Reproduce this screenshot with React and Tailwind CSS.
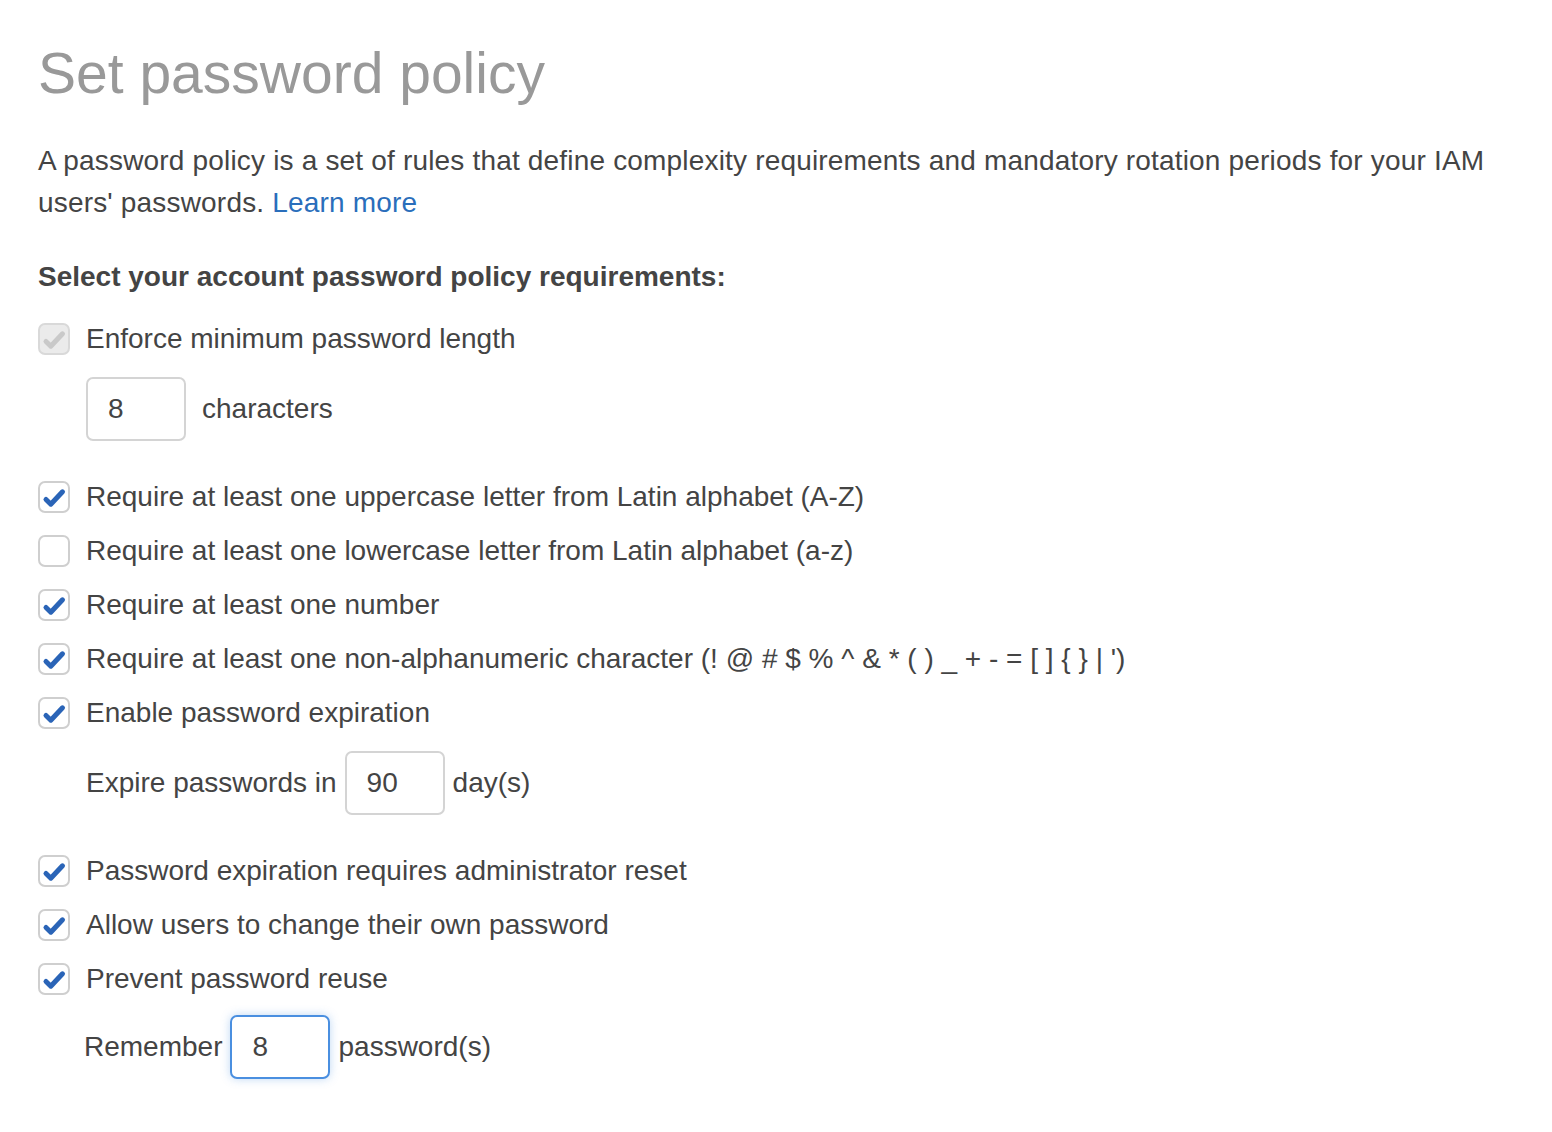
import React from 'react';

// viewBox offset by the 2px border so coordinates are relative to the outer box
const Check = ({ color }) => (
  <svg viewBox="2 2 28 28" className="w-full h-full">
    <path d="M8 18.5 L12.8 23.2 L24.5 10.8" fill="none" stroke={color} strokeWidth="5" strokeLinecap="round" strokeLinejoin="round" />
  </svg>
);

const Checkbox = ({ checked, disabled }) => (
  <div
    className={`w-[32px] h-[32px] shrink-0 rounded-[7px] border-2 ${
      disabled ? 'bg-[#ebebeb] border-[#d9d9d9]' : 'bg-white border-[#cfcfcf]'
    }`}
  >
    {checked && <Check color={disabled ? '#c9c9c9' : '#2a64b7'} />}
  </div>
);

const Row = ({ checked, disabled, children }) => (
  <div className="h-[54px] flex items-center gap-[16px]">
    <Checkbox checked={checked} disabled={disabled} />
    <span>{children}</span>
  </div>
);

const NumInput = ({ value, focused }) => (
  <div
    className={`w-[100px] h-[64px] shrink-0 rounded-[7px] bg-white flex items-center pl-[20px] border-2 ${
      focused ? 'border-[#4a8fe0] shadow-[0_0_10px_rgba(74,143,224,0.35)]' : 'border-[#d4d4d4]'
    }`}
  >
    {value}
  </div>
);

export default function App() {
  return (
    <div className="min-h-[1132px] bg-white pl-[38px] pt-[37px] text-[28px] leading-[42px] text-[#444444]" style={{ fontFamily: '"Liberation Sans", Arial, sans-serif' }}>
      <h1 className="text-[57px] leading-[72px] text-[#999999] font-normal">Set password policy</h1>

      <p className="mt-[31px] pr-[40px] tracking-[0.18px]">
        A password policy is a set of rules that define complexity requirements and mandatory rotation periods for your IAM
        users' passwords. <a className="text-[#2a6ebb]">Learn more</a>
      </p>

      <p className="mt-[32px] font-bold">Select your account password policy requirements:</p>

      <div className="mt-[14px]">
        <Row checked disabled>Enforce minimum password length</Row>
      </div>
      <div className="mt-[11px] pl-[48px] flex items-center gap-[16px]">
        <NumInput value="8" />
        <span>characters</span>
      </div>

      <div className="mt-[29px]">
        <Row checked>Require at least one uppercase letter from Latin alphabet (A-Z)</Row>
        <Row>Require at least one lowercase letter from Latin alphabet (a-z)</Row>
        <Row checked>Require at least one number</Row>
        <Row checked>Require at least one non-alphanumeric character (! @ # $ % ^ &amp; * ( ) _ + - = [ ] {'{'} {'}'} | ')</Row>
        <Row checked>Enable password expiration</Row>
      </div>
      <div className="mt-[11px] pl-[48px] flex items-center gap-[8px]">
        <span>Expire passwords in</span>
        <NumInput value="90" />
        <span>day(s)</span>
      </div>

      <div className="mt-[29px]">
        <Row checked>Password expiration requires administrator reset</Row>
        <Row checked>Allow users to change their own password</Row>
        <Row checked>Prevent password reuse</Row>
      </div>
      <div className="mt-[9px] pl-[46px] flex items-center gap-[8px]">
        <span>Remember</span>
        <NumInput value="8" focused />
        <span>password(s)</span>
      </div>
    </div>
  );
}
